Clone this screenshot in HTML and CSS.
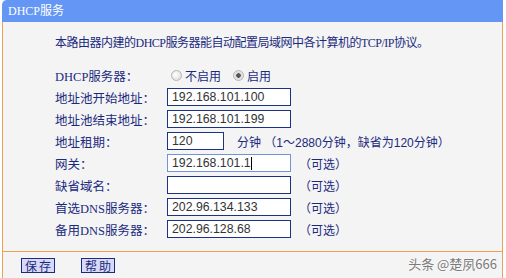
FILE: index.html
```html
<!DOCTYPE html>
<html lang="zh-CN">

<head>
    <meta charset="UTF-8" />
    <title>DHCP服务</title>
    <link rel="stylesheet" href="styles.css">
</head>

<body>
    <div class="panel">
        <div class="panel-title">DHCP服务</div>
        <div class="panel-body">
            <p class="intro">本路由器内建的DHCP服务器能自动配置局域网中各计算机的TCP/IP协议。</p>
            <div class="form-grid">
                <label class="lbl">DHCP服务器：</label>
                <div class="field">
                    <label class="radio"><input type="radio" name="dhcp"> 不启用</label>
                    <label class="radio"><input type="radio" name="dhcp" checked> 启用</label>
                </div>

                <label class="lbl">地址池开始地址：</label>
                <div class="field"><input class="txt" type="text" value="192.168.101.100"></div>

                <label class="lbl">地址池结束地址：</label>
                <div class="field"><input class="txt" type="text" value="192.168.101.199"></div>

                <label class="lbl">地址租期：</label>
                <div class="field"><input class="txt short" type="text" value="120"><span class="note lease">分钟 （1～2880分钟，缺省为120分钟）</span></div>

                <label class="lbl">网关：</label>
                <div class="field"><span class="caret-wrap"><input class="txt focus" type="text" value="192.168.101.1"><span class="caret"></span></span><span class="note">（可选）</span></div>

                <label class="lbl">缺省域名：</label>
                <div class="field"><input class="txt" type="text" value=""><span class="note">（可选）</span></div>

                <label class="lbl">首选DNS服务器：</label>
                <div class="field"><input class="txt" type="text" value="202.96.134.133"><span class="note">（可选）</span></div>

                <label class="lbl">备用DNS服务器：</label>
                <div class="field"><input class="txt" type="text" value="202.96.128.68"><span class="note">（可选）</span></div>
            </div>
        </div>
        <div class="panel-foot">
            <button class="btn">保存</button>
            <button class="btn">帮助</button>
        </div>
        <div class="watermark">头条 @楚夙666</div>
    </div>
</body>

</html>
```

FILE: styles.css
```css
body {
    margin: 0;
    background-color: #ffffff;
    font-family: "Liberation Serif", "Noto Sans CJK SC", sans-serif;
    font-size: 12px;
    color: #1b2a7e;
}

.panel {
    position: relative;
    width: 501px;
    margin-left: 2px;
    height: 278px;
    overflow: hidden;
    background-color: #f4f4f4;
}

.panel-title {
    height: 22px;
    line-height: 22px;
    padding-left: 6px;
    background-color: #6396f5;
    color: #ffffff;
    border-top-left-radius: 5px;
    font-size: 12px;
}

.panel-body {
    border-left: 1px solid #f0a052;
    border-right: 1px solid #f0a052;
    padding: 0 0 11px 52px;
}

.intro {
    margin: 0;
    padding-top: 13px;
    height: 29px;
    line-height: 16px;
    font-size: 12px;
    letter-spacing: -0.5px;
}

.form-grid {
    display: grid;
    grid-template-columns: 112px auto;
    grid-auto-rows: 22px;
}

.lbl {
    display: flex;
    align-items: center;
    font-size: 12.5px;
}

.field {
    display: flex;
    align-items: center;
}

.radio {
    display: flex;
    align-items: center;
    margin-left: 4px;
    margin-right: 8px;
    font-family: "Noto Sans CJK SC", sans-serif;
}

.radio input {
    appearance: none;
    width: 11px;
    height: 11px;
    margin: 0 3px 0 0;
    border: 1px solid #b4b4b4;
    border-radius: 50%;
    background: radial-gradient(circle at 40% 40%, #ffffff, #d6d6d6);
}

.radio input:checked {
    background: radial-gradient(circle, #555555 0 2px, #dcdcdc 2.5px, #f0f0f0);
}

.txt {
    box-sizing: border-box;
    width: 124px;
    height: 18px;
    margin: 0;
    padding: 0 4px;
    border: 1px solid #1c3286;
    background-color: #ffffff;
    font-family: "Liberation Sans", sans-serif;
    font-size: 12.3px;
    color: #333333;
    outline: none;
}

.txt.short {
    width: 57px;
}

.txt.focus {
    border-color: #6f95d8;
}

.caret-wrap {
    position: relative;
    display: flex;
}

.caret {
    position: absolute;
    left: 84px;
    top: 3px;
    width: 1px;
    height: 13px;
    background-color: #000000;
}

.note {
    margin-left: 8px;
    font-family: "Liberation Sans", "Noto Sans CJK SC", sans-serif;
}

.note.lease {
    margin-left: 13px;
}

.panel-foot {
    border-top: 1px solid #f0a052;
    border-left: 1px solid #f0a052;
    border-right: 1px solid #f0a052;
    padding: 6px 0 0 18px;
    display: flex;
    align-items: flex-start;
    gap: 26px;
    height: 40px;
}

.btn {
    box-sizing: border-box;
    width: 34px;
    height: 15px;
    padding: 0;
    border: 1px solid #1c2a80;
    background-color: #d7d9f7;
    color: #1b2a7e;
    font-family: "Noto Sans CJK SC", sans-serif;
    font-size: 12px;
    line-height: 12px;
    letter-spacing: 2px;
    text-indent: 2px;
    white-space: nowrap;
}

.watermark {
    position: absolute;
    right: 6px;
    top: 254px;
    font-family: "Noto Sans CJK SC", sans-serif;
    font-size: 13px;
    color: #7a7a7a;
    text-shadow: 0 0 2px #ffffff;
}
```
